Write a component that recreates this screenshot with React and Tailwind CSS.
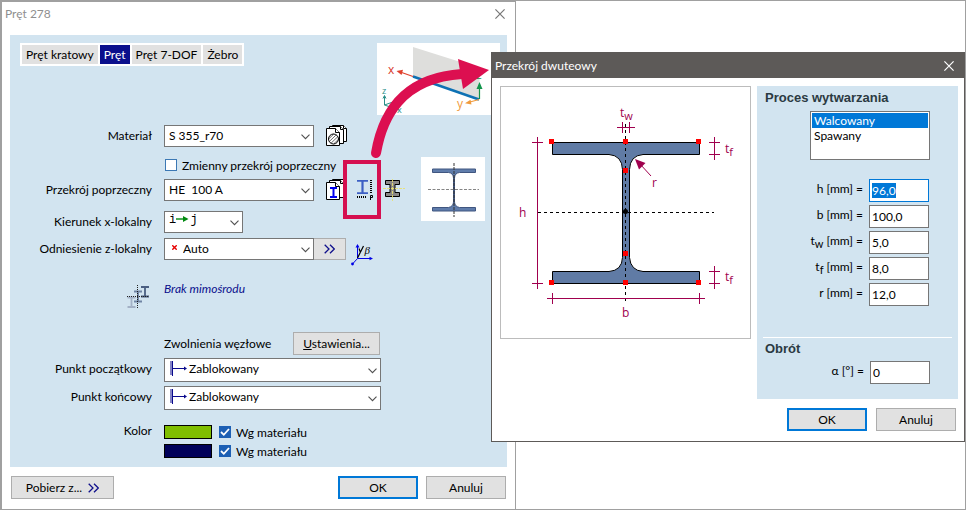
import React, { useEffect, useRef } from "react";

const selectClass =
  "h-full w-full appearance-none rounded-none border border-[#767676] bg-white pr-5 outline-none";
const buttonClass =
  "flex h-[23px] items-center justify-center border border-[#adadad] bg-[#e1e1e1]";
const primaryClass =
  "flex h-[23px] w-20 items-center justify-center border-2 border-[#0078d7] bg-[#e1e1e1]";

function Chevron() {
  return (
    <svg className="pointer-events-none absolute right-1 top-1/2 -mt-0.5" width="9" height="6" viewBox="0 0 9 6" fill="none" stroke="#505050" strokeWidth="1.1">
      <path d="M0.5 0.7 4.5 4.7 8.5 0.7" />
    </svg>
  );
}

function DoubleChevron() {
  return (
    <svg width="11" height="10" viewBox="0 0 11 10" fill="none" stroke="#10108c" strokeWidth="1.3">
      <path d="M0.7 0.7 5 5 0.7 9.3M6 0.7 10.3 5 6 9.3" />
    </svg>
  );
}

function CloseIcon({ color }) {
  return (
    <svg width="10" height="10" viewBox="0 0 10 10" fill="none" stroke={color} strokeWidth="1.2">
      <path d="M0.4 0.4 9.6 9.6M9.6 0.4 0.4 9.6" />
    </svg>
  );
}

function Row({ label, id, className = "", children }) {
  return (
    <div className={`flex gap-3 ${className}`}>
      <label htmlFor={id} className="w-[142px] shrink-0 whitespace-nowrap text-right leading-[22px]">
        {label}
      </label>
      {children}
    </div>
  );
}

function Pages({ children }) {
  return (
    <svg width="22" height="22" viewBox="0 0 22 22" fill="#fff" stroke="#000">
      <path d="M6.5 0.5h11l3 3v13h-14z" />
      <path d="M17.500 0.5v3h3" />
      <path d="M3.500 1.500h11l3 3v14h-14z" />
      <path d="M14.500 1.500v3h3" />
      <path d="M0.500 3.500h9l4 4v13h-13z" />
      <path d="M9.500 3.500v4h4" />
      {children}
    </svg>
  );
}

function MaterialIcon() {
  return (
    <Pages>
      <circle cx="7.500" cy="14" r="5" fill="#fff" />
      <path d="M2.800 13.800 7.800 9M3.300 16.500 10.200 9.900M5 18.200 11.800 11.700M7.700 18.900 12.400 14.400" strokeWidth="0.600" />
    </Pages>
  );
}

function SectionLibraryIcon() {
  return (
    <Pages>
      <path d="M4 9h7M4 18h7" stroke="#0000f0" strokeWidth="1.800" />
      <path d="M7.500 9v9" stroke="#0000f0" strokeWidth="2" />
    </Pages>
  );
}

function ParametricIcon() {
  return (
    <svg width="19" height="22" viewBox="0 0 19 22" fill="none">
      <path d="M2 1.800h11M2 14.200h11" stroke="#3c5fc4" strokeWidth="1.800" />
      <path d="M7.500 2v12" stroke="#3c5fc4" strokeWidth="2.200" />
      <path d="M2 18h10" stroke="#000" strokeWidth="2" strokeDasharray="1 1" />
      <path d="M16 1v13" stroke="#000" strokeWidth="2" strokeDasharray="1 1" />
      <path d="M15.500 21v-4.500h2v2h-2" stroke="#000" />
    </svg>
  );
}

function BeamIcon() {
  return (
    <svg width="23" height="22" viewBox="0 0 23 22" fill="#8a8886" stroke="#000">
      <path d="M2.500 1.500h14v4h-4.500v8h4.500v4h-14v-4h4.500v-8h-4.500z" />
      <path d="M9.500 0v22M0 9.500h22" stroke="#e8e070" strokeWidth="0.900" strokeDasharray="3 1" />
    </svg>
  );
}

function AxisPreview() {
  return (
    <svg width="123" height="72" viewBox="377 43 123 72" className="bg-white" fontFamily="'Open Sans', sans-serif" fontSize="12">
      <path d="M413 47 479.500 68V100L413 77z" fill="#dededc" />
      <path d="M413 76.500 479 99.500" stroke="#0d71b4" strokeWidth="2.400" />
      <path d="M413 76.500 401 72.300" stroke="#e0402c" strokeWidth="1.200" />
      <path d="M396.500 71 403 69.800 401.500 75z" fill="#e0402c" />
      <text x="388" y="74" fill="#d8382a">x</text>
      <path d="M479.500 99V88" stroke="#12954c" strokeWidth="1.200" />
      <path d="M479.500 82 482.500 89H476.500z" fill="#12954c" />
      <text x="476" y="79" fill="#12954c">z</text>
      <path d="M479 99.500 470 102" stroke="#f09a3c" strokeWidth="1.200" />
      <path d="M465 103.200 470.500 99.700 471.500 104.500z" fill="#f09a3c" />
      <text x="457" y="108" fill="#f09a3c">y</text>
      <path d="M384.500 96V105L399 110M384.500 105 397 100.500M383 98.500 384.500 95.500 386 98.500" stroke="#2a8f88" fill="none" />
      <text x="382" y="94" fill="#2a8f88" fontSize="9">z</text>
      <text x="397" y="113" fill="#2a8f88" fontSize="9">x</text>
      <text x="397" y="101" fill="#2a8f88" fontSize="9">y</text>
    </svg>
  );
}

function SectionPreview() {
  return (
    <svg width="64" height="64" viewBox="421 157 64 64" className="bg-white">
      <path
        d="M432.500 169h43v3.500h-16q-4.800 0.500-5 5.500v24q0.200 4.500 5 5.500h16v3.500h-43v-3.500h16q4.800-1 5-5.500v-24q-0.200-5-5-5.500h-16z"
        fill="#5f7cab"
        stroke="#405680"
      />
      <path d="M454 163v54" stroke="#333" strokeDasharray="3 1" strokeWidth="1" />
      <path d="M428 189.500h51" stroke="#777" strokeDasharray="3 1.500" strokeWidth="0.900" />
    </svg>
  );
}

function BetaIcon() {
  return (
    <svg width="24" height="24" viewBox="350 243 24 24" fill="none" stroke="#0000e6">
      <path d="M357.500 245v13.500h14M357.500 258.500 352.500 264" />
      <path d="M355.500 247.500 357.500 244 359.500 247.500zM369.500 256.700 373 258.500 369.500 260.300z" fill="#0000e6" stroke="none" />
      <circle cx="352.500" cy="264" r="1.400" fill="#0000e6" stroke="none" />
      <path d="M357.500 258 363.500 246M359 248.500 360.500 252.500" stroke="#000" strokeWidth="1.200" />
      <text x="364.500" y="254" fill="#000" stroke="none" fontSize="11" fontStyle="italic" fontFamily="'Liberation Serif', serif">β</text>
    </svg>
  );
}

function EccentricityIcon() {
  return (
    <svg width="24" height="24" viewBox="127 285 24 24" fill="none" strokeWidth="1.800">
      <path d="M127.500 297.500h8M127.500 307h8M131.500 297v10" stroke="#a3b1c6" />
      <path d="M134 291.500h8M134 301.500h8M138 291v10" stroke="#6f83a3" />
      <path d="M141 287h8M141 296.500h8M145 287v10" stroke="#4b5f82" />
      <path d="M137.500 285v24M127 296.500h22" stroke="#222" strokeWidth="1" strokeDasharray="1 1" />
    </svg>
  );
}

function SupportSelect({ id }) {
  return (
    <div className="relative h-6 w-[217px]">
      <select id={id} className={`${selectClass} pb-0.5 pl-6`}>
        <option>Zablokowany</option>
      </select>
      <svg className="pointer-events-none absolute left-1.5 top-[3px]" width="18" height="16" viewBox="0 0 18 16" fill="none" stroke="#0a0a8c">
        <path d="M2.500 0v15" />
        <path d="M1 0.500v14" strokeWidth="2" strokeDasharray="1 1" />
        <path d="M3 7.500h13" />
        <path d="M14 5.500 17 7.500 14 9.500z" fill="#0a0a8c" stroke="none" />
      </svg>
      <Chevron />
    </div>
  );
}

function CheckBox({ id, label, checked }) {
  return (
    <span className="flex items-center gap-[5px]">
      <span className="relative size-3">
        <input
          id={id}
          type="checkbox"
          defaultChecked={checked}
          className="peer block size-3 appearance-none border border-[#3c78b4] bg-white checked:border-[#1c5fb4] checked:bg-[#1c5fb4]"
        />
        <svg className="pointer-events-none absolute left-0 top-0 hidden peer-checked:block" width="12" height="12" viewBox="0 0 12 12" fill="none" stroke="#fff" strokeWidth="1.800">
          <path d="M2 6 4.800 8.800 10 3" />
        </svg>
      </span>
      <label htmlFor={id} className="whitespace-nowrap pt-0.5 leading-4">{label}</label>
    </span>
  );
}

const tabs = ["Pręt kratowy", "Pręt", "Pręt 7-DOF", "Żebro"];

function MemberDialog() {
  return (
    <section className="absolute -left-px -top-px w-[516px] border border-l-2 border-t-2 border-[#a0a0a0] bg-white">
      <header className="flex h-[33px] items-start justify-between pl-[3px] pr-2.5">
        <h1 className="pt-0.5 leading-5 text-[#8f8f8f]">Pręt 278</h1>
        <button aria-label="Zamknij" className="pt-[7px]"><CloseIcon color="#777" /></button>
      </header>
      <div className="mx-2 bg-[#d2e4f0] pb-[9px] pt-2">
        <div className="flex items-start justify-between pl-2.5 pr-[7px]">
          <nav className="flex gap-0.5 bg-white p-0.5">
            {tabs.map((t) => (
              <button
                key={t}
                className={`h-[19px] whitespace-nowrap px-1 leading-[19px] ${t === "Pręt" ? "bg-[#0a0f8c] text-white" : "bg-[#e1e1e1]"}`}
              >
                {t}
              </button>
            ))}
          </nav>
          <AxisPreview />
        </div>
        <Row label="Materiał" id="material" className="mt-2.5 h-[22px]">
          <div className="relative h-full w-[150px]">
            <select id="material" className={`${selectClass} pl-1`}><option>S 355_r70</option></select>
            <Chevron />
          </div>
          <button aria-label="Biblioteka materiałów"><MaterialIcon /></button>
        </Row>
        <div className="mt-2.5 flex justify-between pr-[22px]">
          <div>
            <div className="flex h-4 items-center pl-[155px]">
              <CheckBox id="variable" label="Zmienny przekrój poprzeczny" />
            </div>
            <Row label="Przekrój poprzeczny" id="section" className="mt-1.5 h-[22px]">
              <div className="relative h-full w-[150px]">
                <select id="section" className={`${selectClass} pl-1`}><option>HE&nbsp; 100 A</option></select>
                <Chevron />
              </div>
              <div className="flex">
                <button aria-label="Biblioteka przekrojów"><SectionLibraryIcon /></button>
                <button aria-label="Przekrój parametryczny" className="relative ml-[7px]">
                  <ParametricIcon />
                  <span className="absolute -left-3 -top-[19px] h-[59px] w-[38px] border-4 border-[#d50f50]" />
                </button>
                <button aria-label="Edytuj przekrój" className="ml-[9px]"><BeamIcon /></button>
              </div>
            </Row>
            <Row label="Kierunek x-lokalny" id="direction" className="mt-2.5 h-[22px]">
              <div className="relative h-full w-[79px]">
                <select id="direction" className={`${selectClass} pb-1 pl-1 font-[family-name:'Liberation_Mono',monospace]`}>
                  <option>i&nbsp;&nbsp;j</option>
                </select>
                <svg className="pointer-events-none absolute left-3 top-1" width="13" height="8" viewBox="0 0 13 8">
                  <path d="M0 4h8" stroke="#008a10" strokeWidth="1.400" />
                  <path d="M7 1 12.500 4 7 7z" fill="#008a10" />
                </svg>
                <Chevron />
              </div>
            </Row>
          </div>
          <SectionPreview />
        </div>
        <Row label="Odniesienie z-lokalny" id="reference" className="mt-[5px] h-[22px]">
          <div className="flex">
            <div className="relative h-full w-[150px]">
              <select id="reference" className={`${selectClass} pl-[18px]`}><option>Auto</option></select>
              <svg className="pointer-events-none absolute left-2 top-[7px]" width="5" height="5" viewBox="0 0 5 5" stroke="#e60000" strokeWidth="1.400">
                <path d="M0.300 0.300 4.700 4.700M4.700 0.300 0.300 4.700" />
              </svg>
              <Chevron />
            </div>
            <button aria-label="Więcej" className="flex w-8 items-center justify-center border border-l-0 border-[#adadad] bg-[#e1e1e1]">
              <DoubleChevron />
            </button>
            <button aria-label="Obrót" className="ml-1 mt-[5px] h-6"><BetaIcon /></button>
          </div>
        </Row>
        <div className="mt-[21px] flex gap-[13px] pl-[117px]">
          <button aria-label="Mimośród" className="mt-1"><EccentricityIcon /></button>
          <span className="italic leading-4 text-[#0a0f8c]">Brak mimośrodu</span>
        </div>
        <div className="mt-[23px] flex items-center pl-[154px]">
          <span className="w-[129px] whitespace-nowrap">Zwolnienia węzłowe</span>
          <button className={`${buttonClass} w-[87px]`}><span><u>U</u>stawienia...</span></button>
        </div>
        <Row label="Punkt początkowy" id="start" className="mt-[3px]"><SupportSelect id="start" /></Row>
        <Row label="Punkt końcowy" id="end" className="mt-1"><SupportSelect id="end" /></Row>
        <div className="mt-[15px] flex gap-3">
          <span className="w-[142px] text-right leading-3">Kolor</span>
          <div className="flex flex-col gap-[5px]">
            <div className="flex h-3.5 items-center gap-[7px]">
              <button aria-label="Kolor 1" className="h-3.5 w-12 border border-black bg-[#80be00]" />
              <CheckBox id="color1" label="Wg materiału" checked />
            </div>
            <div className="flex h-3.5 items-center gap-[7px]">
              <button aria-label="Kolor 2" className="h-3.5 w-12 border border-black bg-[#00005a]" />
              <CheckBox id="color2" label="Wg materiału" checked />
            </div>
          </div>
        </div>
      </div>
      <footer className="flex gap-2 px-[9px] pb-2.5 pt-[9px]">
        <button className={`${buttonClass} mr-auto w-[103px] gap-1.5`}>Pobierz z... <DoubleChevron /></button>
        <button className={primaryClass}>OK</button>
        <button className={`${buttonClass} w-20`}>Anuluj</button>
      </footer>
    </section>
  );
}

const nodes = [
  [551.5, 141.5], [625.5, 141.5], [698.5, 141.5], [625.5, 170.5],
  [625.5, 253.5], [551.5, 282.5], [625.5, 282.5], [698.5, 282.5],
];

function SectionDrawing() {
  return (
    <svg width="249" height="251" viewBox="501 87 249 251" fontFamily="'Open Sans', sans-serif" fontSize="12">
      <path
        d="M552.500 142.500h147v12h-56.500q-13 1-13.500 15v88q1 13 13.500 14h56.500v12h-147v-12h56.500q13-1 13.500-14v-88q-0.500-14-13.500-15h-56.500z"
        fill="#607ba5"
        stroke="#000"
      />
      <path d="M625.500 124v178M538 212.500h176" stroke="#000" strokeDasharray="3 3" />
      {nodes.map(([x, y]) => (
        <rect key={`${x}-${y}`} x={x - 2.5} y={y - 2.5} width="5" height="5" fill="#f00" />
      ))}
      <circle cx="625.500" cy="211.500" r="2.500" />
      <path
        d="M537.500 137v152M532 142.500h11M532 283.500h11M617 127.500h18M622.500 122v11M629.500 122v11M714.500 137v23M709 142.500h11M709 154.500h11M714.500 266v23M709 271.500h11M709 283.500h11M547 298.500h158M552.500 293v11M699.500 293v11M651 176 640 164"
        fill="none"
        stroke="#a0004e"
      />
      <path d="M635 159 645.500 163 639 169.500z" fill="#a0004e" />
      <g fill="#a0004e">
        <text x="519" y="217">h</text>
        <text x="622" y="317">b</text>
        <text x="652" y="187">r</text>
        <text x="620" y="117">t<tspan dy="3" fontSize="11">w</tspan></text>
        <text x="725" y="153">t<tspan dy="3" fontSize="11">f</tspan></text>
        <text x="725" y="281">t<tspan dy="3" fontSize="11">f</tspan></text>
      </g>
    </svg>
  );
}

const dimensions = [
  { id: "b", name: "b", value: "100,0" },
  { id: "tw", name: "t", sub: "w", value: "5,0" },
  { id: "tf", name: "t", sub: "f", value: "8,0" },
  { id: "r", name: "r", value: "12,0" },
];

const inputClass = "h-[23px] w-[60px] border border-[#767676] bg-white px-0.5 outline-none";
const headingClass =
  "font-[family-name:'Liberation_Sans',sans-serif] text-[13px] font-bold leading-4 text-[#2b3a42]";

function SectionDialog() {
  const heightInput = useRef(null);
  useEffect(() => {
    heightInput.current.focus();
    heightInput.current.select();
  }, []);
  return (
    <section className="absolute left-[490px] top-[51px] w-[474px] border border-[#5d5a58] bg-white">
      <header className="flex h-[25px] items-center justify-between bg-[#5d5a58] pl-[3px] pr-2.5 text-white">
        <h2>Przekrój dwuteowy</h2>
        <button aria-label="Zamknij okno"><CloseIcon color="#fff" /></button>
      </header>
      <div className="flex items-start gap-1.5 pl-2 pr-1.5 pt-2">
        <div className="border border-[#bcbcbc]"><SectionDrawing /></div>
        <div className="h-[313px] flex-1 bg-[#d2e4f0] px-2 pt-1">
          <h3 className={headingClass}>Proces wytwarzania</h3>
          <select
            size="3"
            aria-label="Proces wytwarzania"
            defaultValue="w"
            className="ml-[45px] mt-[5px] block h-[49px] w-[120px] appearance-none overflow-hidden rounded-none border border-[#767676] bg-white p-px outline-none"
          >
            <option value="w" className="h-[15px] min-h-0 px-0.5 py-0 leading-[15px] checked:bg-[linear-gradient(#0078d7,#0078d7)] checked:[-webkit-text-fill-color:white]">Walcowany</option>
            <option value="s" className="h-[15px] min-h-0 px-0.5 py-0 leading-[15px]">Spawany</option>
          </select>
          <div className="mt-[19px] flex flex-col gap-[3px] pr-[21px]">
            <div className="flex justify-end gap-1.5">
              <label htmlFor="h" className="leading-5">h [mm] =</label>
              <input
                id="h"
                ref={heightInput}
                defaultValue="96,0"
                className="h-[23px] w-[60px] border border-[#0078d7] bg-white px-0.5 outline-none selection:bg-[#0078d7] selection:text-white"
              />
            </div>
            {dimensions.map((d) => (
              <div key={d.id} className="flex justify-end gap-1.5">
                <label htmlFor={d.id} className="leading-5">
                  {d.name}
                  {d.sub && <sub className="text-[11px]">{d.sub}</sub>} [mm] =
                </label>
                <input id={d.id} defaultValue={d.value} className={inputClass} />
              </div>
            ))}
          </div>
          <div className="-mx-0.5 mt-[31px] border-t border-white pl-0.5 pt-[3px]">
            <h3 className={headingClass}>Obrót</h3>
          </div>
          <div className="mt-1 flex justify-end gap-1.5 pr-5">
            <label htmlFor="alpha" className="leading-5">α [°] =</label>
            <input id="alpha" defaultValue="0" className={inputClass} />
          </div>
        </div>
      </div>
      <footer className="flex justify-end gap-[9px] px-2 pb-2.5 pt-[9px]">
        <button className={primaryClass}>OK</button>
        <button className={`${buttonClass} w-20`}>Anuluj</button>
      </footer>
    </section>
  );
}

export default function App() {
  return (
    <main className="relative min-h-screen border border-[#a0a0a0] bg-white font-[family-name:Lato,'Open_Sans',sans-serif] text-xs text-black">
      <MemberDialog />
      <SectionDialog />
      <svg className="pointer-events-none absolute left-[369px] top-[57px]" width="122" height="103" viewBox="370 58 122 103">
        <path d="M376 153C382 118 400 78 462 74" fill="none" stroke="#dc0f50" strokeWidth="10" strokeLinecap="round" />
        <path d="M458 59 489 70 463 89z" fill="#dc0f50" />
      </svg>
    </main>
  );
}
